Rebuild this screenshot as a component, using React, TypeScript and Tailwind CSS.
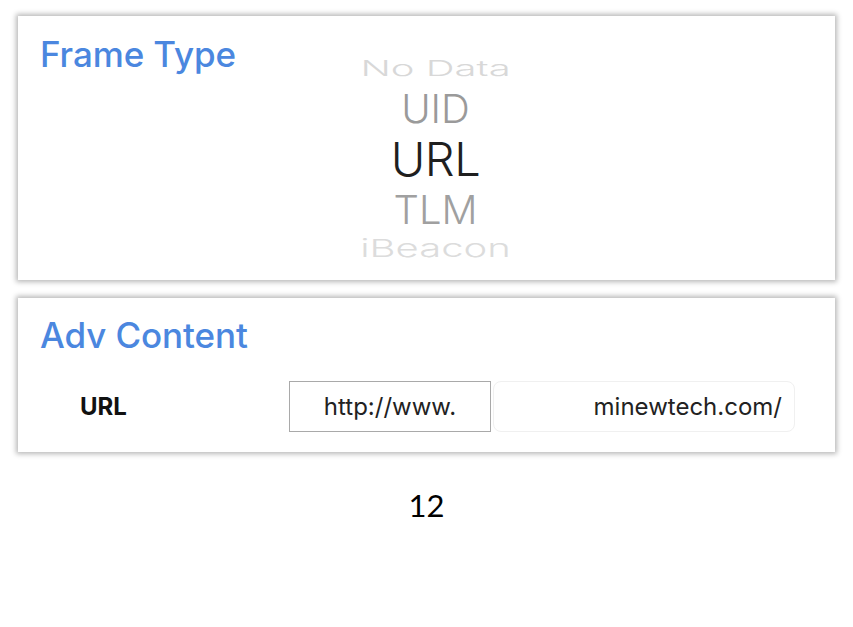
import React from "react";

export default function App() {
  const sf = { fontFamily: "Inter, 'Liberation Sans', sans-serif" };
  return (
    <div className="w-[853px] h-[627px] bg-white overflow-hidden" style={sf}>
      <div className="pt-[16px] pl-[18px] flex flex-col gap-[18px]">
        {/* Frame Type card */}
        <div className="relative w-[817px] h-[264px] bg-white shadow-[0_0_5px_2px_rgba(0,0,0,0.28)]">
          <div className="absolute left-[22px] top-[18px] text-[35px] leading-[40px] font-medium text-[#4b87df] tracking-[-0.1px]">
            Frame Type
          </div>
          <div className="relative h-full flex flex-col items-center pt-[37px] pl-[18px] text-center">
            <div className="h-[30px] text-[40px] leading-[30px] text-[#d8d8d8] scale-y-[0.55] origin-center font-light whitespace-nowrap">
              No Data
            </div>
            <div className="mt-[4px] h-[44px] text-[40px] leading-[44px] text-[#9a9a9a] font-light">UID</div>
            <div className="mt-[3px] h-[50px] text-[47px] leading-[50px] text-[#1f1f1f] font-light tracking-[-0.5px]">URL</div>
            <div className="mt-[4px] h-[44px] text-[40px] leading-[44px] text-[#a0a0a0] font-light">TLM</div>
            <div className="mt-[2px] h-[30px] text-[40px] leading-[30px] text-[#dcdcdc] scale-y-[0.6] origin-center font-light whitespace-nowrap">
              iBeacon
            </div>
          </div>
        </div>

        {/* Adv Content card */}
        <div className="relative w-[817px] h-[154px] bg-white shadow-[0_0_5px_2px_rgba(0,0,0,0.28)]">
          <div className="pl-[22px] pt-[17px] text-[35px] leading-[40px] font-medium text-[#4b87df] tracking-[-0.1px]">
            Adv Content
          </div>
          <div className="flex items-center mt-[26px]">
            <div className="w-[271px] pl-[62px] text-[24px] font-bold text-[#111]">URL</div>
            <div className="w-[202px] h-[51px] border border-[#a9a9a9] flex items-center justify-center text-[24px] text-[#222]">
              http://www.
            </div>
            <div className="ml-[2px] w-[302px] h-[51px] border border-[#f0f0f0] rounded-[8px] flex items-center justify-end pr-[12px] text-[24px] text-[#222]">
              minewtech.com/
            </div>
          </div>
        </div>
      </div>
      <div className="mt-[30px] text-center text-[31px] text-black" style={{ fontFamily: "Lato, 'Open Sans', sans-serif" }}>
        12
      </div>
    </div>
  );
}
